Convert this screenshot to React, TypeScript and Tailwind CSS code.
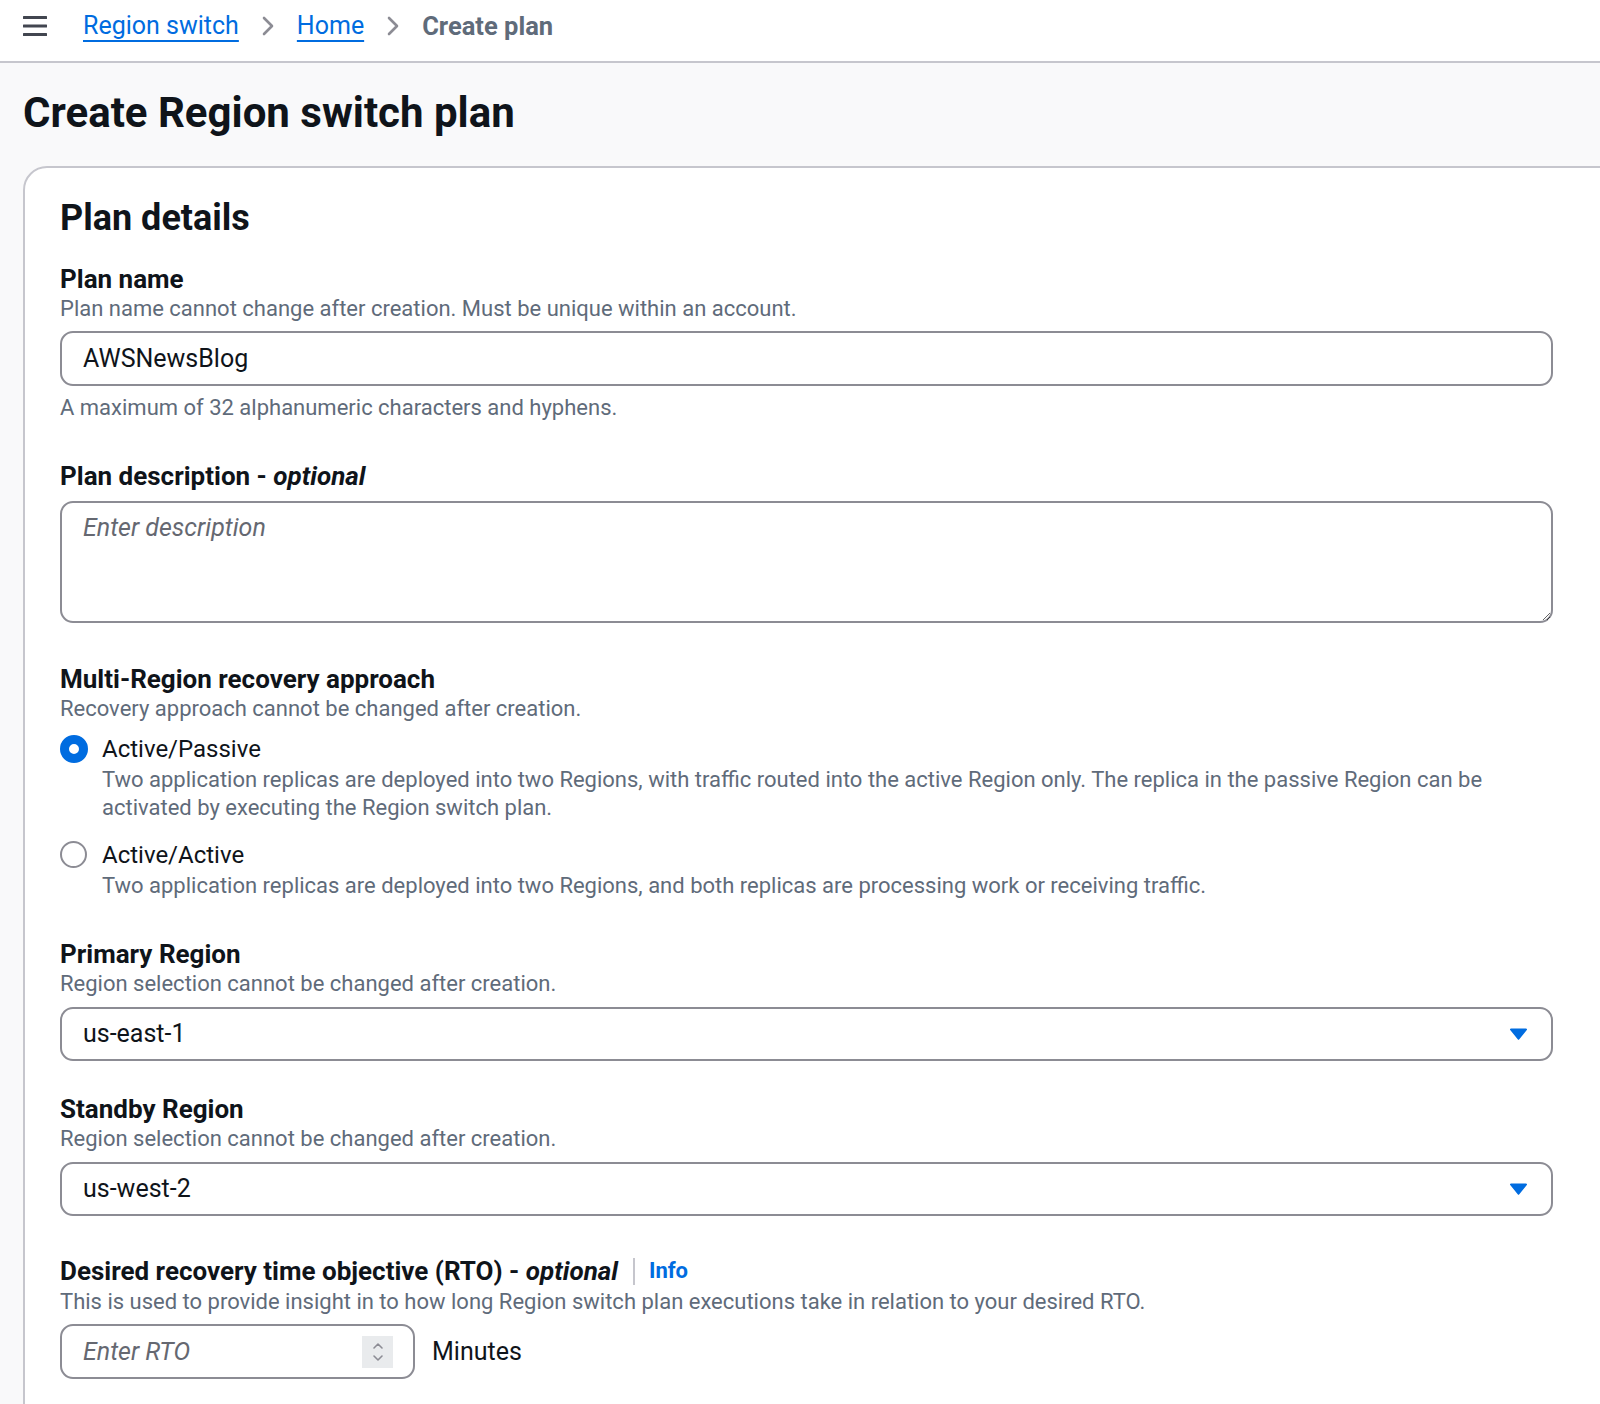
import React from "react";

const Label = ({ children, className = "" }: { children: React.ReactNode; className?: string }) => (
  <div className={"text-[26px] leading-[32px] font-bold text-[#0f141a] " + className}>{children}</div>
);

const Desc = ({ children, className = "" }: { children: React.ReactNode; className?: string }) => (
  <div className={"text-[22px] leading-[28px] text-[#5f6b7a] " + className}>{children}</div>
);

const Caret = () => (
  <svg width="19" height="14" viewBox="0 0 19 14" className="mr-[23px]">
    <path d="M2 1.5 H17 a1 1 0 0 1 0.8 1.6 L10.3 12.3 a1 1 0 0 1 -1.6 0 L1.2 3.1 A1 1 0 0 1 2 1.5 Z" fill="#006ce0" />
  </svg>
);

const Chevron = () => (
  <svg width="14" height="22" viewBox="0 0 14 22" className="mx-[22px]">
    <path d="M3 3 L11 11 L3 19" fill="none" stroke="#8c8c94" strokeWidth="2.6" strokeLinecap="round" strokeLinejoin="round" />
  </svg>
);

export default function App() {
  return (
    <div className="w-[1600px] h-[1404px] overflow-hidden bg-[#f9f9fa] font-['Roboto',sans-serif] text-[#0f141a]">
      <header className="h-[63px] bg-white border-b-2 border-[#c6c6cd]">
        <div className="h-[52px] flex items-center">
          <svg width="26" height="22" viewBox="0 0 26 22" className="ml-[22px]">
            <rect x="1" y="1" width="24" height="3" rx="0.5" fill="#424650" />
            <rect x="1" y="9.5" width="24" height="3" rx="0.5" fill="#424650" />
            <rect x="1" y="18" width="24" height="3" rx="0.5" fill="#424650" />
          </svg>
          <a className="ml-[35px] text-[25px] leading-[34px] text-[#006ce0] underline decoration-2 underline-offset-[6px]">Region switch</a>
          <Chevron />
          <a className="text-[25px] leading-[34px] text-[#006ce0] underline decoration-2 underline-offset-[6px]">Home</a>
          <Chevron />
          <span className="text-[25.5px] leading-[34px] font-bold text-[#5f6b7a]">Create plan</span>
        </div>
      </header>

      <h1 className="ml-[23px] mt-[25px] text-[42px] leading-[50px] font-bold text-[#0f141a]">Create Region switch plan</h1>

      <div className="ml-[23px] mt-[28px] w-[1640px] h-[1300px] bg-white border-2 border-[#c6c6cd] rounded-[24px] pl-[35px] pt-[28px]">
        <div className="w-[1493px]">
          <h2 className="text-[36px] leading-[44px] font-bold">Plan details</h2>

          <Label className="mt-[23px]">Plan name</Label>
          <Desc>Plan name cannot change after creation. Must be unique within an account.</Desc>
          <div className="mt-[8px] h-[55px] border-2 border-[#8c8c94] rounded-[13px] px-[21px] flex items-center text-[25px]">AWSNewsBlog</div>
          <Desc className="mt-[8px]">A maximum of 32 alphanumeric characters and hyphens.</Desc>

          <Label className="mt-[38px]">
            Plan description - <i>optional</i>
          </Label>
          <textarea
            className="mt-[9px] block w-full h-[122px] border-2 border-[#8c8c94] rounded-[13px] px-[21px] pt-[9px] text-[25px] leading-[32px] resize-y outline-none placeholder:italic placeholder:text-[#656871]"
            placeholder="Enter description"
          />

          <Label className="mt-[40px]">Multi-Region recovery approach</Label>
          <Desc>Recovery approach cannot be changed after creation.</Desc>

          <div className="mt-[9px] flex">
            <div className="w-[28px] h-[28px] mt-[3px] rounded-full border-[9px] border-[#006ce0] bg-white shrink-0" />
            <div className="ml-[14px]">
              <div className="text-[24px] leading-[34px]">Active/Passive</div>
              <Desc>
                Two application replicas are deployed into two Regions, with traffic routed into the active Region only. The replica in the passive Region can be
                <br />
                activated by executing the Region switch plan.
              </Desc>
            </div>
          </div>

          <div className="mt-[16px] flex">
            <div className="w-[27px] h-[27px] mt-[3px] rounded-full border-2 border-[#8c8c94] bg-white shrink-0" />
            <div className="ml-[15px]">
              <div className="text-[24px] leading-[34px]">Active/Active</div>
              <Desc>Two application replicas are deployed into two Regions, and both replicas are processing work or receiving traffic.</Desc>
            </div>
          </div>

          <Label className="mt-[38px]">Primary Region</Label>
          <Desc>Region selection cannot be changed after creation.</Desc>
          <div className="mt-[9px] h-[54px] border-2 border-[#8c8c94] rounded-[13px] pl-[21px] flex items-center justify-between text-[25px]">
            <span>us-east-1</span>
            <Caret />
          </div>

          <Label className="mt-[32px]">Standby Region</Label>
          <Desc>Region selection cannot be changed after creation.</Desc>
          <div className="mt-[9px] h-[54px] border-2 border-[#8c8c94] rounded-[13px] pl-[21px] flex items-center justify-between text-[25px]">
            <span>us-west-2</span>
            <Caret />
          </div>

          <div className="mt-[39px] flex items-center">
            <Label>
              Desired recovery time objective (RTO) - <i>optional</i>
            </Label>
            <div className="ml-[15px] w-[2px] h-[27px] bg-[#c6c6cd]" />
            <a className="ml-[14px] text-[22px] leading-[32px] font-bold text-[#006ce0]">Info</a>
          </div>
          <Desc className="mt-[1px]">This is used to provide insight in to how long Region switch plan executions take in relation to your desired RTO.</Desc>

          <div className="mt-[8px] flex items-center">
            <div className="w-[355px] h-[55px] border-2 border-[#8c8c94] rounded-[13px] pl-[21px] pr-[20px] flex items-center">
              <span className="flex-1 text-[25px] italic text-[#656871]">Enter RTO</span>
              <div className="w-[31px] h-[32px] bg-[#e9ebed] flex items-center justify-center">
                <svg width="14" height="24" viewBox="0 0 14 24">
                  <path d="M3 8 L7 4 L11 8" fill="none" stroke="#8c8c94" strokeWidth="1.6" strokeLinecap="round" strokeLinejoin="round" />
                  <path d="M3 16 L7 20 L11 16" fill="none" stroke="#8c8c94" strokeWidth="1.6" strokeLinecap="round" strokeLinejoin="round" />
                </svg>
              </div>
            </div>
            <span className="ml-[17px] text-[25px]">Minutes</span>
          </div>
        </div>
      </div>
    </div>
  );
}
